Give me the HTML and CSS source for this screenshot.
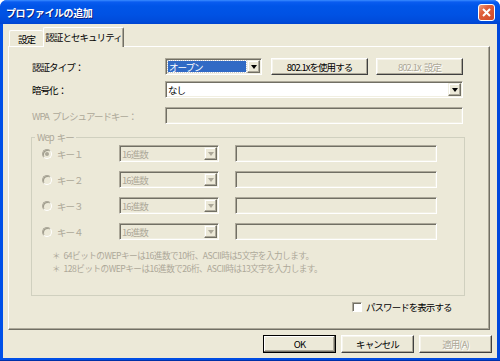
FILE: index.html
```html
<html>
<head>
<title>プロファイルの追加</title>
<meta charset="utf-8">
<link rel="stylesheet" href="styles.css">
</head>
<body>

<div class="window">
  <div class="titlebar">
    <span class="title">プロファイルの追加</span>
    <span class="close">
      <svg width="9" height="9" viewBox="0 0 9 9"><path d="M1 1L8 8M8 1L1 8" stroke="#fff" stroke-width="2"/></svg>
    </span>
  </div>

  <div class="client">
    <div class="tabs">
      <span class="tab t-general">設定</span>
      <span class="tab t-auth active">認証とセキュリティ</span>
    </div>

    <div class="panel">
      <div class="row r-auth">
        <span class="label">認証タイプ：</span>
        <div class="field select w-auth focus"><span class="val">オープン</span><span class="drop"></span></div>
        <button class="btn b-use">802.1xを使用する</button>
        <button class="btn b-set" disabled>802.1x 設定</button>
      </div>

      <div class="row r-enc">
        <span class="label">暗号化：</span>
        <div class="field select w-wide"><span class="val">なし</span><span class="drop"></span></div>
      </div>

      <div class="row r-wpa">
        <span class="label off">WPA プレシュアードキー：</span>
        <div class="field off w-wide"></div>
      </div>

      <fieldset class="group">
        <legend>Wep キー</legend>

        <div class="keyrow">
          <span class="radio checked"></span>
          <span class="keyname">キー１</span>
          <div class="field select off w-key"><span class="val">16進数</span><span class="drop"></span></div>
          <div class="field off w-keyval"></div>
        </div>
        <div class="keyrow">
          <span class="radio"></span>
          <span class="keyname">キー２</span>
          <div class="field select off w-key"><span class="val">16進数</span><span class="drop"></span></div>
          <div class="field off w-keyval"></div>
        </div>
        <div class="keyrow">
          <span class="radio"></span>
          <span class="keyname">キー３</span>
          <div class="field select off w-key"><span class="val">16進数</span><span class="drop"></span></div>
          <div class="field off w-keyval"></div>
        </div>
        <div class="keyrow">
          <span class="radio"></span>
          <span class="keyname">キー４</span>
          <div class="field select off w-key"><span class="val">16進数</span><span class="drop"></span></div>
          <div class="field off w-keyval"></div>
        </div>

        <div class="notes">
          <div>＊ 64ビットのWEPキーは16進数で10桁、ASCII時は5文字を入力します。</div>
          <div>＊ 128ビットのWEPキーは16進数で26桁、ASCII時は13文字を入力します。</div>
        </div>
      </fieldset>

      <div class="row r-pass">
        <span class="check"></span>
        <span class="checklabel">パスワードを表示する</span>
      </div>
    </div>

    <div class="buttons">
      <button class="btn b-dlg default">OK</button>
      <button class="btn b-dlg">キャンセル</button>
      <button class="btn b-dlg" disabled>適用(A)</button>
    </div>
  </div>
</div>

</body>
</html>
```

FILE: styles.css
```css
* { box-sizing: border-box; }

body {
  margin: 0;
  font-family: "Noto Sans CJK JP", "Liberation Sans", sans-serif;
  font-size: 9.5px;
  letter-spacing: -0.95px;
  word-spacing: 2px;
  color: #000;
  white-space: nowrap;
}

/* Window frame */

.window {
  width: 500px;
  height: 361px;
  display: flex;
  flex-direction: column;
  background: linear-gradient(to right, #0050e8, #0048dc);
  border-bottom: 1px solid #0030a8;
  border-radius: 7px 7px 0 0;
  overflow: hidden;
}

.titlebar {
  height: 24px;
  flex: none;
  display: flex;
  align-items: center;
  justify-content: space-between;
  padding: 0 5px 0 6px;
  background: linear-gradient(#3a8cff 0, #0a5cf0 2px, #0055e8 6px, #0052e4 60%, #004bda 90%, #0044d0 100%);
}

.title {
  color: #fff;
  font-weight: bold;
  font-size: 10px;
  letter-spacing: -0.4px;
  text-shadow: 1px 1px #0a1e80;
}

.close {
  width: 17px;
  height: 17px;
  display: flex;
  align-items: center;
  justify-content: center;
  border: 1px solid #fff;
  border-radius: 3px;
  background: linear-gradient(135deg, #f0a080 0, #e0603c 35%, #d04a28 100%);
}

.client {
  flex: 1;
  margin: 0 3px 2px;
  background: #ece9d8;
  padding-top: 3px;
}

/* Tabs */

.tabs {
  display: flex;
  align-items: flex-end;
  height: 19px;
  padding-left: 6px;
}

.tab {
  display: flex;
  align-items: center;
  justify-content: center;
  background: #ece9d8;
  border: 1px solid;
  border-bottom: none;
  border-color: #fff #716f64 #716f64 #fff;
  border-radius: 2px 2px 0 0;
  box-shadow: inset -1px 0 #aca899;
}

.t-general {
  width: 34px;
  height: 16px;
  border-right: none;
  box-shadow: none;
  padding-top: 1px;
}

.t-auth {
  width: 81px;
  height: 20px;
  margin-bottom: -1px;
  position: relative;
  padding-bottom: 2px;
}

.panel {
  margin-left: 5px;
  width: 482px;
  height: 284px;
  border: 1px solid;
  border-color: #fff #716f64 #716f64 #fff;
  box-shadow: inset -1px -1px #aca899;
  padding: 11px 0 0 23px;
}

/* Rows */

.row {
  display: flex;
  align-items: center;
  height: 17px;
}

.r-enc { margin-top: 6px; }
.r-wpa { margin-top: 9px; }

.label {
  width: 133px;
  flex: none;
}

.off { color: #aca899; }

.field {
  height: 17px;
  display: flex;
  align-items: center;
  background: #fff;
  border: 1px solid;
  border-color: #aca899 #fff #fff #aca899;
  box-shadow: inset 1px 1px #716f64, inset -1px -1px #f1efe2;
}

.field.off { background: #ece9d8; }

.select .val {
  flex: 1;
  height: 100%;
  display: flex;
  align-items: center;
  padding-left: 2px;
}

.select.focus .val {
  height: 11px;
  margin: 0 1px 0 2px;
  padding-left: 1px;
  background: #316ac5;
  color: #fff;
  outline: 1px dotted #c8c8c8;
  outline-offset: 0;
}

.drop {
  width: 13px;
  height: 13px;
  margin-right: 1px;
  flex: none;
  display: flex;
  align-items: center;
  justify-content: center;
  background: #ece9d8;
  border: 1px solid;
  border-color: #f1efe2 #716f64 #716f64 #f1efe2;
  box-shadow: inset -1px -1px #aca899, inset 1px 1px #fff;
}

.drop::after {
  content: "";
  border-left: 3px solid transparent;
  border-right: 3px solid transparent;
  border-top: 4px solid #000;
  margin-top: 1px;
}

.off .drop::after { border-top-color: #aca899; }

.w-auth { width: 97px; }
.w-wide { width: 298px; }
.w-key { width: 100px; }
.w-keyval { width: 202px; margin-left: 16px; }

.btn {
  height: 17px;
  padding: 0;
  font: inherit;
  letter-spacing: inherit;
  word-spacing: inherit;
  color: #000;
  background: #ece9d8;
  border: 1px solid;
  border-color: #fff #404040 #404040 #fff;
  box-shadow: inset -1px -1px #aca899, inset 1px 1px #f6f4ec;
}

.btn:disabled {
  color: #aca899;
  text-shadow: 1px 1px #fff;
}

.b-use { width: 97px; margin-left: 9px; }
.b-set { width: 87px; margin-left: 8px; }

/* Wep group */

.group {
  margin: 7px 0 0 -1px;
  width: 434px;
  height: 165px;
  padding: 2px 0 0 3px;
  border: 1px solid #d0d0bf;
  color: #aca899;
}

.group legend {
  padding: 0 2px;
  line-height: 12px;
}

.keyrow {
  display: flex;
  align-items: center;
  height: 17px;
  margin-bottom: 9px;
  padding-left: 7px;
}

.radio {
  width: 10px;
  height: 10px;
  flex: none;
  border-radius: 50%;
  border: 1px solid;
  border-color: #aca899 #fff #fff #aca899;
  box-shadow: inset 1px 1px #9d9a8a;
  background: #ece9d8;
  display: flex;
  align-items: center;
  justify-content: center;
}

.radio.checked::after {
  content: "";
  width: 4px;
  height: 4px;
  border-radius: 50%;
  background: #aca899;
}

.keyname {
  width: 62px;
  margin-left: 5px;
}

.notes {
  margin-top: 4px;
  padding-left: 17px;
  line-height: 12.5px;
  font-size: 8.6px;
  letter-spacing: -0.5px;
}

/* Password + dialog buttons */

.r-pass {
  margin-top: 6px;
  height: 10px;
}

.check {
  width: 10px;
  height: 10px;
  margin-left: 320px;
  background: #fff;
  border: 1px solid;
  border-color: #aca899 #fff #fff #aca899;
  box-shadow: inset 1px 1px #716f64;
}

.checklabel { margin-left: 4px; }

.buttons {
  display: flex;
  justify-content: flex-end;
  gap: 5px;
  margin-top: 5px;
  padding-right: 5px;
}

.b-dlg { width: 73px; height: 18px; }

.default {
  border-color: #000;
  box-shadow: inset -1px -1px #716f64, inset 1px 1px #fff, inset -2px -2px #aca899;
}
```
